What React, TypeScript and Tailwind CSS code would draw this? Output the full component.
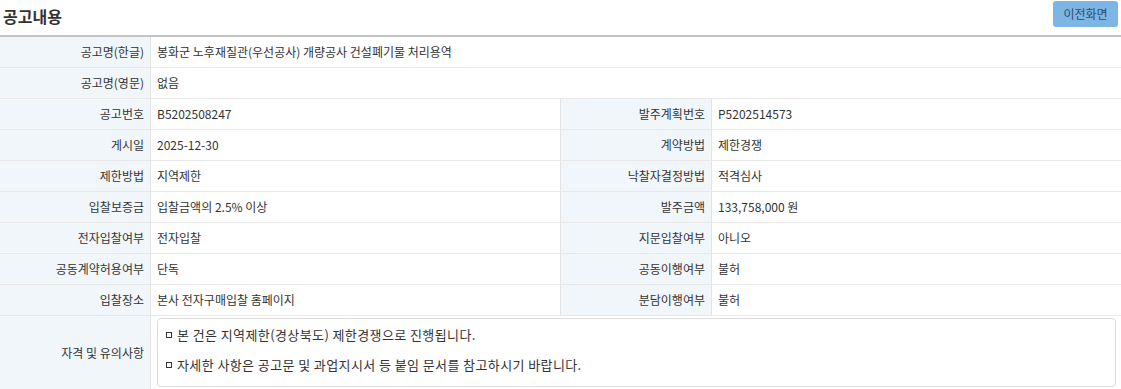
import React from "react";

const font = { fontFamily: '"Noto Sans CJK KR", "Noto Sans", sans-serif' };

function Label({ children, className = "" }: { children: React.ReactNode; className?: string }) {
  return (
    <div className={`w-[151px] shrink-0 bg-[#f1f6fb] border-r border-[#e3e3e3] flex items-center justify-end pr-[6px] ${className}`}>
      {children}
    </div>
  );
}

function Value({ children, className = "" }: { children: React.ReactNode; className?: string }) {
  return <div className={`flex items-center pl-[6px] ${className}`}>{children}</div>;
}

function FullRow({ label, value }: { label: string; value: string }) {
  return (
    <div className="flex h-[31px] border-b border-[#e8e8e8]">
      <Label>{label}</Label>
      <Value className="flex-1">{value}</Value>
    </div>
  );
}

function HalfRow({ l1, v1, l2, v2 }: { l1: string; v1: string; l2: string; v2: string }) {
  return (
    <div className="flex h-[31px] border-b border-[#e8e8e8]">
      <Label>{l1}</Label>
      <Value className="w-[410px] shrink-0 border-r border-[#e3e3e3]">{v1}</Value>
      <Label>{l2}</Label>
      <Value className="flex-1">{v2}</Value>
    </div>
  );
}

export default function App() {
  return (
    <div className="w-[1121px] h-[389px] bg-white text-[#333] text-[12px] overflow-hidden" style={font}>
      <div className="flex items-center justify-between h-[35px] pl-[3px] pr-[3px]">
        <h2 className="text-[16px] font-bold text-[#333] leading-none -mt-[4px]">공고내용</h2>
        <button className="h-[26px] w-[65px] -mt-[8px] rounded-[3px] bg-[#7db5e5] text-[#2c4c6e] text-[12px]">이전화면</button>
      </div>
      <div className="border-t-2 border-[#c4c4c4]">
        <FullRow label="공고명(한글)" value="봉화군 노후재질관(우선공사) 개량공사 건설폐기물 처리용역" />
        <FullRow label="공고명(영문)" value="없음" />
        <HalfRow l1="공고번호" v1="B5202508247" l2="발주계획번호" v2="P5202514573" />
        <HalfRow l1="게시일" v1="2025-12-30" l2="계약방법" v2="제한경쟁" />
        <HalfRow l1="제한방법" v1="지역제한" l2="낙찰자결정방법" v2="적격심사" />
        <HalfRow l1="입찰보증금" v1="입찰금액의 2.5% 이상" l2="발주금액" v2="133,758,000 원" />
        <HalfRow l1="전자입찰여부" v1="전자입찰" l2="지문입찰여부" v2="아니오" />
        <HalfRow l1="공동계약허용여부" v1="단독" l2="공동이행여부" v2="불허" />
        <HalfRow l1="입찰장소" v1="본사 전자구매입찰 홈페이지" l2="분담이행여부" v2="불허" />
        <div className="flex h-[73px]">
          <Label>자격 및 유의사항</Label>
          <div className="flex-1 pl-[6px] pr-[5px] pt-[2px]">
            <div className="border border-[#dcdcdc] rounded-[4px] pl-[8px] pt-[1px] pb-[6px] leading-[30px] text-[13px] tracking-[0.4px]">
              <p className="flex items-center"><span className="inline-block w-[6px] h-[6px] border border-[#333] mr-[5px]" />본 건은 지역제한(경상북도) 제한경쟁으로 진행됩니다.</p>
              <p className="flex items-center"><span className="inline-block w-[6px] h-[6px] border border-[#333] mr-[5px]" />자세한 사항은 공고문 및 과업지시서 등 붙임 문서를 참고하시기 바랍니다.</p>
            </div>
          </div>
        </div>
      </div>
    </div>
  );
}
